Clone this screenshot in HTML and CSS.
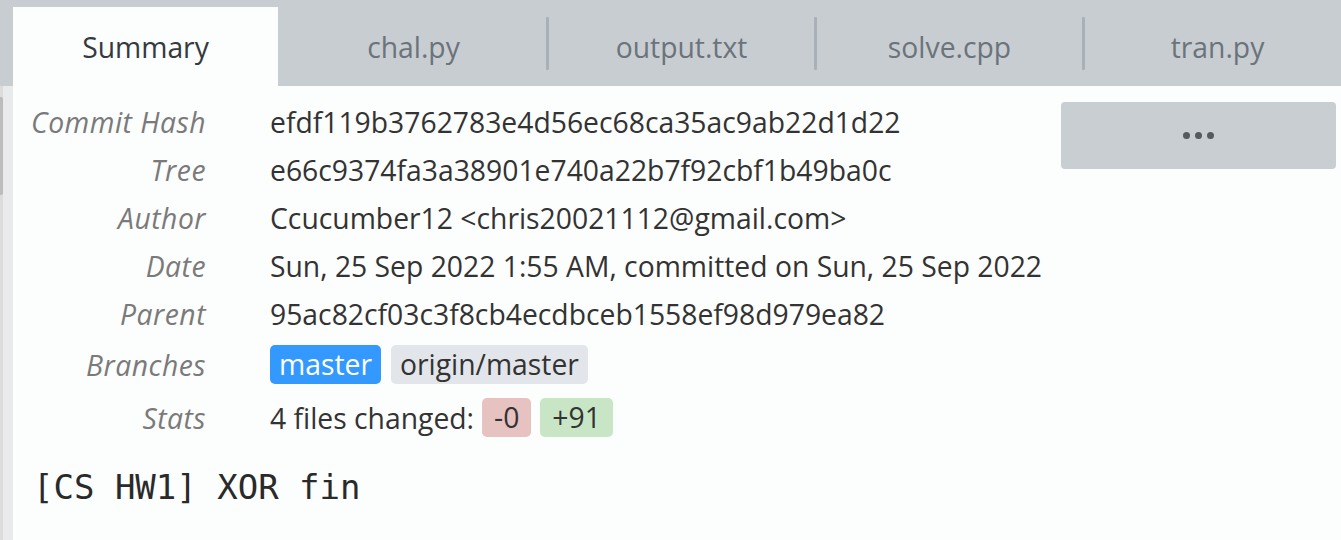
FILE: index.html
```html
<!DOCTYPE html>
<html>
<head>
<meta charset="utf-8">
<link rel="stylesheet" href="styles.css">
</head>
<body>
<div class="tabbar">
  <div class="tab active">Summary</div>
  <span class="sep hidden"></span>
  <div class="tab">chal.py</div>
  <span class="sep"></span>
  <div class="tab">output.txt</div>
  <span class="sep"></span>
  <div class="tab">solve.cpp</div>
  <span class="sep"></span>
  <div class="tab">tran.py</div>
</div>
<div class="main">
  <div class="scrollstrip"><div class="thumb"></div></div>
  <div class="content">
    <div class="summary">
      <div class="details">
        <div class="label">Commit Hash</div><div class="value">efdf119b3762783e4d56ec68ca35ac9ab22d1d22</div>
        <div class="label">Tree</div><div class="value">e66c9374fa3a38901e740a22b7f92cbf1b49ba0c</div>
        <div class="label">Author</div><div class="value">Ccucumber12 &lt;chris20021112@gmail.com&gt;</div>
        <div class="label">Date</div><div class="value">Sun, 25 Sep 2022 1:55 AM, committed on Sun, 25 Sep 2022 1:55 AM</div>
        <div class="label">Parent</div><div class="value">95ac82cf03c3f8cb4ecdbceb1558ef98d979ea82</div>
        <div class="label">Branches</div><div class="value"><span class="badge blue">master</span><span class="badge gray">origin/master</span></div>
        <div class="label">Stats</div><div class="value">4 files changed:<span class="badge red">-0</span><span class="badge green">+91</span></div>
      </div>
      <div class="more"><span class="dot"></span><span class="dot"></span><span class="dot"></span></div>
    </div>
    <div class="message">[CS HW1] XOR fin</div>
  </div>
</div>
</body>
</html>
```
FILE: styles.css
```css
html, body {
  margin: 0;
  padding: 0;
}
body {
  width: 1341px;
  height: 540px;
  overflow: hidden;
  background: #fcfdfd;
  font-family: "Open Sans", "Noto Sans", sans-serif;
  font-size: 28.3px;
  color: #333;
}
.tabbar {
  display: flex;
  align-items: flex-end;
  height: 86px;
  background: #c8cdd1;
  padding-left: 13px;
  overflow: hidden;
  box-sizing: border-box;
}
.tab {
  flex: 0 0 265px;
  height: 79px;
  display: flex;
  align-items: center;
  justify-content: center;
  color: #6b737b;
  padding-top: 1px;
  box-sizing: border-box;
}
.tab.active {
  background: #fcfdfd;
  color: #343a40;
}
.sep {
  flex: 0 0 3px;
  height: 53px;
  align-self: center;
  background: #a9b0b7;
  border-radius: 1px;
}
.sep.hidden {
  background: transparent;
}
.main {
  display: flex;
  height: 454px;
}
.scrollstrip {
  flex: 0 0 13px;
  background: #e9eaeb;
  display: flex;
  flex-direction: column;
  padding-top: 11px;
  box-sizing: border-box;
  border-left: 3px solid #dcdcdd;
}
.thumb {
  width: 3px;
  height: 98px;
  margin-left: -3px;
  background: #bcbcbc;
  border-radius: 0 2px 2px 0;
}
.content {
  flex: 1;
  display: flex;
  flex-direction: column;
}
.summary {
  display: flex;
  align-items: flex-start;
}
.details {
  display: grid;
  grid-template-columns: 193px 777px;
  grid-template-rows: repeat(5, 48px) 53px 53px;
  column-gap: 64px;
  padding-top: 12px;
}
.label {
  font-style: italic;
  color: #7a7a7a;
  text-align: right;
  letter-spacing: 0.5px;
  white-space: nowrap;
  display: flex;
  align-items: center;
  justify-content: flex-end;
}
.value {
  white-space: nowrap;
  overflow: hidden;
  display: flex;
  align-items: center;
}
.badge {
  display: inline-block;
  height: 39px;
  line-height: 38px;
  padding: 0 9px;
  border-radius: 5px;
  margin-right: 10px;
}
.badge.blue { background: #3399ff; color: #fff; margin-top: -1px; }
.badge.gray { background: #e2e6ea; color: #333; margin-top: -1px; }
.badge.red { background: #e6c3c1; color: #333; margin-left: 8px; margin-right: 9px; padding: 0 12px; }
.badge.green { background: #c8e6c6; color: #333; padding: 0 12px; }
.more {
  flex: 0 0 275px;
  height: 67px;
  margin-top: 16px;
  margin-left: 14px;
  background: #c9ced3;
  border-radius: 4px;
  display: flex;
  justify-content: center;
  align-items: center;
  gap: 5px;
}
.dot {
  width: 7px;
  height: 7px;
  border-radius: 50%;
  background: #555a5e;
}
.message {
  font-family: "DejaVu Sans Mono", monospace;
  font-size: 34px;
  color: #2a2a2a;
  padding-left: 20px;
  margin-top: 20px;
  line-height: 46px;
}
```
